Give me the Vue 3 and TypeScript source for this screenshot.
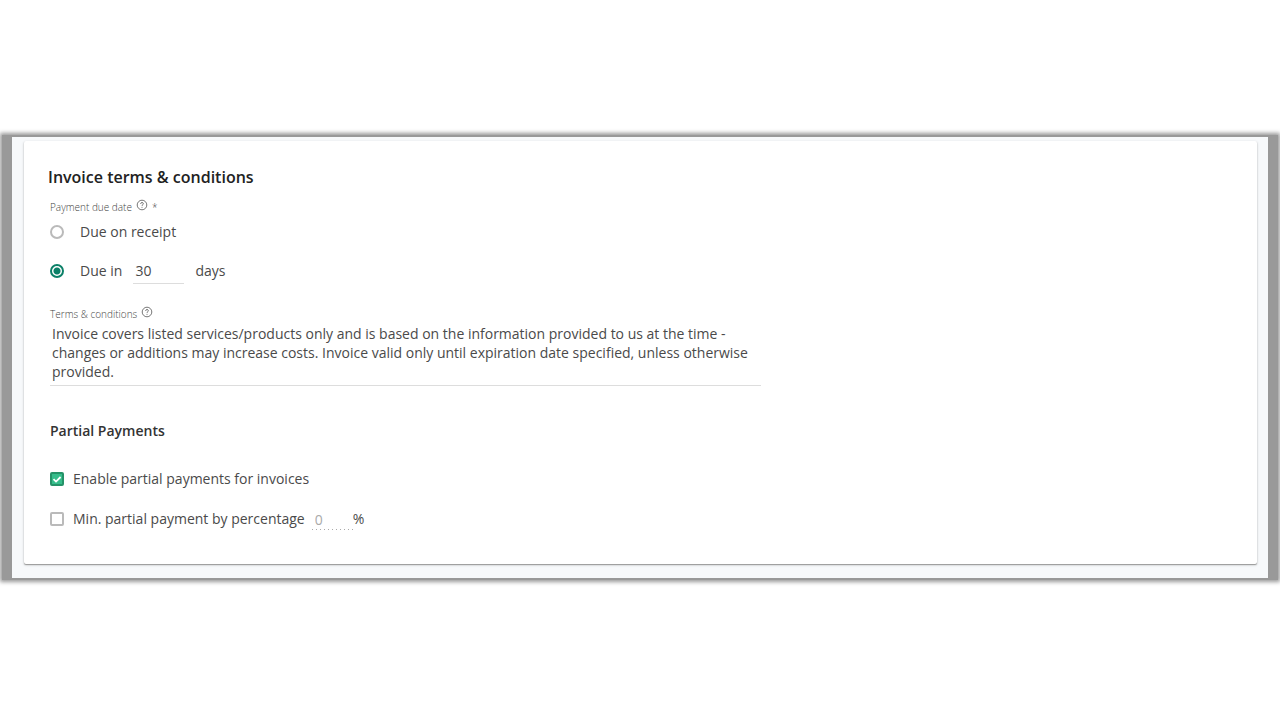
<script setup lang="ts">
import { ref } from 'vue'

const due = ref<'receipt' | 'days'>('days')
const days = ref('30')
const terms = ref(
  'Invoice covers listed services/products only and is based on the information provided to us at the time - changes or additions may increase costs. Invoice valid only until expiration date specified, unless otherwise provided.',
)
const partial = ref(true)
const minPercent = ref(false)
const percent = ref('')
</script>

<template>
  <main class="page">
    <div class="frame">
      <div class="panel">
        <form class="card" @submit.prevent>
          <h1>Invoice terms &amp; conditions</h1>

          <div class="body">
            <div id="due-label" class="caption">
              <span>Payment due date</span>
              <svg class="help" viewBox="0 0 12 12" aria-hidden="true">
                <circle cx="6" cy="6" r="4.8" />
                <path d="M4.6 4.9C4.6 4 5.2 3.5 6 3.5s1.4.5 1.4 1.2C7.4 5.600 6 5.700 6 6.900M6 7.900v.9" />
              </svg>
              <span class="star">*</span>
            </div>

            <div role="radiogroup" aria-labelledby="due-label">
              <div class="row receipt">
                <input id="due-receipt" v-model="due" class="radio" type="radio" name="due" value="receipt" />
                <label for="due-receipt">Due on receipt</label>
              </div>
              <div class="row indays">
                <input id="due-days" v-model="due" class="radio" type="radio" name="due" value="days" />
                <label for="due-days">Due in</label>
                <input v-model="days" class="days" type="text" aria-label="Number of days" />
                <span>days</span>
              </div>
            </div>

            <div class="caption terms-caption">
              <label for="terms">Terms &amp; conditions</label>
              <svg class="help" viewBox="0 0 12 12" aria-hidden="true">
                <circle cx="6" cy="6" r="4.8" />
                <path d="M4.6 4.9C4.6 4 5.2 3.5 6 3.5s1.4.5 1.4 1.2C7.4 5.600 6 5.700 6 6.900M6 7.900v.9" />
              </svg>
            </div>
            <textarea id="terms" v-model="terms" rows="3" spellcheck="false"></textarea>

            <h2>Partial Payments</h2>
            <div class="row check-row">
              <input id="partial" v-model="partial" class="check" type="checkbox" />
              <label for="partial">Enable partial payments for invoices</label>
            </div>
            <div class="row check-row">
              <input id="min" v-model="minPercent" class="check" type="checkbox" />
              <label for="min">Min. partial payment by percentage</label>
              <input v-model="percent" class="percent" type="text" placeholder="0" aria-label="Minimum percentage" :disabled="!minPercent" />
              <span>%</span>
            </div>
          </div>
        </form>
      </div>
    </div>
  </main>
</template>

<style>
body {
  background: #fff;
}
</style>

<style scoped>
* {
  box-sizing: border-box;
}

.page {
  padding: 135px 2px;
  font-family: 'Open Sans', 'Noto Sans', sans-serif;
  font-size: 14px;
  line-height: 20px;
  color: #4a4a4a;
}

.frame {
  padding: 2px 10px;
  background: #999;
  box-shadow: 0 0 4px 2px #999;
}

.panel {
  padding: 4px 11px 14px 12px;
  background: #f7f9fb;
}

.card {
  padding: 24px 24px 35px;
  background: #fff;
  border-radius: 2px;
  box-shadow: 0 1px 1px #999, 0 1px 3px rgba(0, 0, 0, 0.18);
}

h1 {
  margin: 0;
  font-size: 16px;
  line-height: 24px;
  font-weight: 600;
  color: #222;
}

.body {
  padding-left: 2px;
}

.caption {
  display: flex;
  align-items: center;
  gap: 4px;
  height: 16px;
  margin-top: 10px;
  font-size: 10px;
  line-height: 16px;
  font-weight: 300;
  color: #444;
}

.help {
  width: 12px;
  height: 12px;
  margin-bottom: 4px;
  fill: none;
  stroke: #777;
  stroke-width: 1;
}

.row {
  display: flex;
  align-items: center;
}

.receipt {
  margin-top: 7px;
}

.indays {
  margin-top: 16px;
}

input,
textarea {
  margin: 0;
  padding: 0;
  border: 0;
  border-radius: 0;
  outline: 0;
  background: transparent;
  font: inherit;
  color: inherit;
}

.radio,
.check {
  appearance: none;
  flex: none;
  width: 14px;
  height: 14px;
  border: 2px solid #bababa;
}

.radio {
  margin-right: 16px;
  border-radius: 50%;
}

.radio:checked {
  border-color: #0b8068;
  background: radial-gradient(circle, #0b8068 3px, transparent 4px);
}

.days {
  width: 51px;
  height: 26px;
  margin: 0 11px;
  padding: 0 2px 1px;
  border-bottom: 1px solid #ddd;
}

.terms-caption {
  margin-top: 22px;
}

textarea {
  display: block;
  width: 711px;
  max-width: 100%;
  height: 64px;
  padding: 2px 2px 0;
  border-bottom: 1px solid #ddd;
  line-height: 19px;
  resize: none;
  overflow: hidden;
}

h2 {
  margin: 35px 0 28px;
  font-size: 14px;
  line-height: 20px;
  font-weight: 600;
  color: #333;
}

.check-row {
  height: 20px;
}

.check-row + .check-row {
  margin-top: 20px;
}

.check {
  margin-right: 9px;
  border-radius: 2px;
}

.check:checked {
  border: 2px solid #259268;
  background: #36bd8b url("data:image/svg+xml,%3Csvg xmlns='http://www.w3.org/2000/svg' viewBox='0 0 12 12'%3E%3Cpath d='M2.500 6.200 5 8.600 9.600 4' fill='none' stroke='white' stroke-width='1.800'/%3E%3C/svg%3E") center / 12px 12px no-repeat;
}

.percent {
  width: 41px;
  height: 22px;
  margin-left: 7px;
  padding: 1px 3px 0;
  background: repeating-linear-gradient(90deg, #aaa 0 1px, transparent 1px 4px) bottom / 100% 1px no-repeat;
}

.percent::placeholder {
  color: #aaa;
  opacity: 1;
}
</style>
